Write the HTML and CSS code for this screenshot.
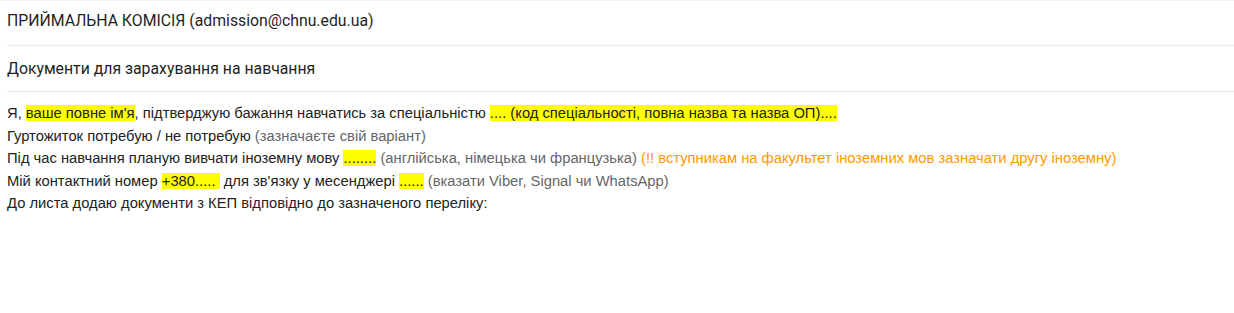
FILE: index.html
```html
<!DOCTYPE html>
<html lang="uk">
<head>
  <meta charset="UTF-8" />
  <title>Документи для зарахування на навчання</title>
  <link rel="stylesheet" href="styles.css">
</head>
<body>
  <div class="compose">
    <div class="field">ПРИЙМАЛЬНА КОМІСІЯ (admission@chnu.edu.ua)</div>
    <div class="field">Документи для зарахування на навчання</div>

    <div class="message">
      <div class="line">Я, <span class="mark">ваше повне ім'я</span>, підтверджую бажання навчатись за спеціальністю <span class="mark">.... (код спеціальності, повна назва та назва ОП)....</span></div>
      <div class="line">Гуртожиток потребую / не потребую <span class="hint">(зазначаєте свій варіант)</span></div>
      <div class="line">Під час навчання планую вивчати іноземну мову <span class="mark">........</span> <span class="hint">(англійська, німецька чи французька)</span> <span class="warn">(!! вступникам на факультет іноземних мов зазначати другу іноземну)</span></div>
      <div class="line">Мій контактний номер <span class="mark">+380.....&nbsp;</span> для зв'язку у месенджері <span class="mark">......</span> <span class="hint">(вказати Viber, Signal чи WhatsApp)</span></div>
      <div class="line">До листа додаю документи з КЕП відповідно до зазначеного переліку:</div>
    </div>
  </div>
</body>
</html>
```

FILE: styles.css
```css
* {
  box-sizing: border-box;
}

body {
  margin: 0;
  background: #fff;
  border-top: 1px solid #f0f4f9;
  color: #222;
}

.compose {
  padding-left: 7px;
}

.field {
  font-family: Roboto, Arial, sans-serif;
  font-size: 15.8px;
  color: #1f1f1f;
  height: 45px;
  line-height: 40px;
  border-bottom: 1px solid #e8eaed;
}

.field + .field {
  height: 46px;
  line-height: 46px;
}

.message {
  font-family: "Liberation Sans", Arial, sans-serif;
  font-size: 14.75px;
  padding-top: 10px;
}

.line {
  line-height: 22.5px;
}

.mark {
  background: #ffff00;
}

.hint {
  color: #666;
}

.warn {
  color: #ff9900;
}
```
